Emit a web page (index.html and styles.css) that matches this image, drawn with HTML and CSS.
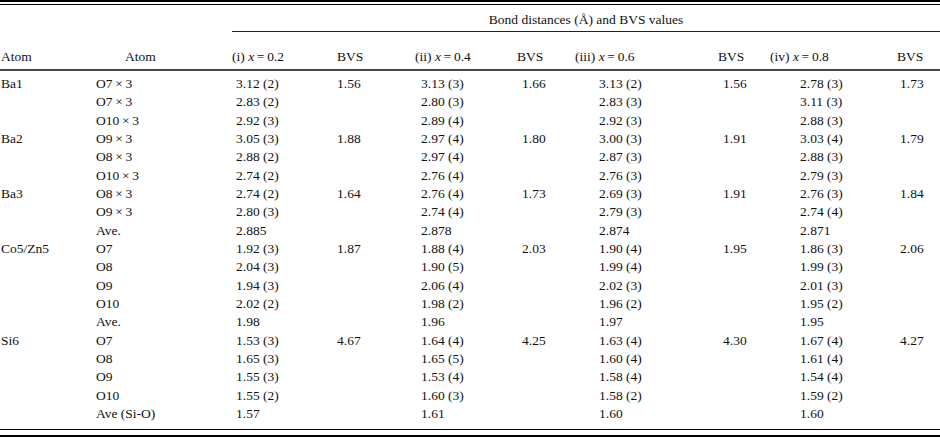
FILE: index.html
```html
<!DOCTYPE html>
<html lang="en">
<head>
<meta charset="utf-8">
<title>Bond distances and BVS values</title>
<link rel="stylesheet" href="styles.css">
</head>
<body>
<div class="sheet">
  <div class="rule-top"></div>
  <table class="bvs">
    <colgroup>
      <col class="w1"><col class="w2"><col class="w3"><col class="w4"><col class="w5">
      <col class="w6"><col class="w7"><col class="w8"><col class="w9"><col class="w10">
    </colgroup>
    <thead>
      <tr class="span-row">
        <th></th><th></th>
        <th colspan="8" class="spanner">Bond distances (Å) and BVS values</th>
      </tr>
      <tr class="head-row">
        <th class="h1">Atom</th>
        <th class="h2">Atom</th>
        <th class="h3">(i) <i>x</i>&thinsp;=&thinsp;0.2</th>
        <th class="h4">BVS</th>
        <th class="h5">(ii) <i>x</i>&thinsp;=&thinsp;0.4</th>
        <th class="h6">BVS</th>
        <th class="h7">(iii) <i>x</i>&thinsp;=&thinsp;0.6</th>
        <th class="h8">BVS</th>
        <th class="h9">(iv) <i>x</i>&thinsp;=&thinsp;0.8</th>
        <th class="h10">BVS</th>
      </tr>
    </thead>
    <tbody>
      <tr class="first"><td>Ba1</td><td>O7&thinsp;×&thinsp;3</td><td>3.12 (2)</td><td>1.56</td><td>3.13 (3)</td><td>1.66</td><td>3.13 (2)</td><td>1.56</td><td>2.78 (3)</td><td>1.73</td></tr>
      <tr><td></td><td>O7&thinsp;×&thinsp;3</td><td>2.83 (2)</td><td></td><td>2.80 (3)</td><td></td><td>2.83 (3)</td><td></td><td>3.11 (3)</td><td></td></tr>
      <tr><td></td><td>O10&thinsp;×&thinsp;3</td><td>2.92 (3)</td><td></td><td>2.89 (4)</td><td></td><td>2.92 (3)</td><td></td><td>2.88 (3)</td><td></td></tr>
      <tr><td>Ba2</td><td>O9&thinsp;×&thinsp;3</td><td>3.05 (3)</td><td>1.88</td><td>2.97 (4)</td><td>1.80</td><td>3.00 (3)</td><td>1.91</td><td>3.03 (4)</td><td>1.79</td></tr>
      <tr><td></td><td>O8&thinsp;×&thinsp;3</td><td>2.88 (2)</td><td></td><td>2.97 (4)</td><td></td><td>2.87 (3)</td><td></td><td>2.88 (3)</td><td></td></tr>
      <tr><td></td><td>O10&thinsp;×&thinsp;3</td><td>2.74 (2)</td><td></td><td>2.76 (4)</td><td></td><td>2.76 (3)</td><td></td><td>2.79 (3)</td><td></td></tr>
      <tr><td>Ba3</td><td>O8&thinsp;×&thinsp;3</td><td>2.74 (2)</td><td>1.64</td><td>2.76 (4)</td><td>1.73</td><td>2.69 (3)</td><td>1.91</td><td>2.76 (3)</td><td>1.84</td></tr>
      <tr><td></td><td>O9&thinsp;×&thinsp;3</td><td>2.80 (3)</td><td></td><td>2.74 (4)</td><td></td><td>2.79 (3)</td><td></td><td>2.74 (4)</td><td></td></tr>
      <tr><td></td><td>Ave.</td><td>2.885</td><td></td><td>2.878</td><td></td><td>2.874</td><td></td><td>2.871</td><td></td></tr>
      <tr><td>Co5/Zn5</td><td>O7</td><td>1.92 (3)</td><td>1.87</td><td>1.88 (4)</td><td>2.03</td><td>1.90 (4)</td><td>1.95</td><td>1.86 (3)</td><td>2.06</td></tr>
      <tr><td></td><td>O8</td><td>2.04 (3)</td><td></td><td>1.90 (5)</td><td></td><td>1.99 (4)</td><td></td><td>1.99 (3)</td><td></td></tr>
      <tr><td></td><td>O9</td><td>1.94 (3)</td><td></td><td>2.06 (4)</td><td></td><td>2.02 (3)</td><td></td><td>2.01 (3)</td><td></td></tr>
      <tr><td></td><td>O10</td><td>2.02 (2)</td><td></td><td>1.98 (2)</td><td></td><td>1.96 (2)</td><td></td><td>1.95 (2)</td><td></td></tr>
      <tr><td></td><td>Ave.</td><td>1.98</td><td></td><td>1.96</td><td></td><td>1.97</td><td></td><td>1.95</td><td></td></tr>
      <tr><td>Si6</td><td>O7</td><td>1.53 (3)</td><td>4.67</td><td>1.64 (4)</td><td>4.25</td><td>1.63 (4)</td><td>4.30</td><td>1.67 (4)</td><td>4.27</td></tr>
      <tr><td></td><td>O8</td><td>1.65 (3)</td><td></td><td>1.65 (5)</td><td></td><td>1.60 (4)</td><td></td><td>1.61 (4)</td><td></td></tr>
      <tr><td></td><td>O9</td><td>1.55 (3)</td><td></td><td>1.53 (4)</td><td></td><td>1.58 (4)</td><td></td><td>1.54 (4)</td><td></td></tr>
      <tr><td></td><td>O10</td><td>1.55 (2)</td><td></td><td>1.60 (3)</td><td></td><td>1.58 (2)</td><td></td><td>1.59 (2)</td><td></td></tr>
      <tr class="last"><td></td><td>Ave (Si-O)</td><td>1.57</td><td></td><td>1.61</td><td></td><td>1.60</td><td></td><td>1.60</td><td></td></tr>
    </tbody>
  </table>
  <div class="rule-bottom"></div>
</div>
</body>
</html>
```
FILE: styles.css
```css
html, body {
  margin: 0;
  padding: 0;
  background: #ffffff;
}

.sheet {
  width: 940px;
  font-family: "Liberation Serif", "Times New Roman", serif;
  font-size: 13.5px;
  color: #111;
}

.rule-top {
  height: 2px;
  border-top: 2px solid #000;
  border-bottom: 1px solid #000;
}

.rule-bottom {
  height: 2px;
  margin-top: 5px;
  background: #000;
}

.bvs {
  width: 940px;
  table-layout: fixed;
  border-collapse: collapse;
  border-spacing: 0;
}

.w1 { width: 90px; }
.w2 { width: 142px; }
.w3 { width: 88px; }
.w4 { width: 80px; }
.w5 { width: 105px; }
.w6 { width: 65px; }
.w7 { width: 130px; }
.w8 { width: 65px; }
.w9 { width: 115px; }
.w10 { width: 60px; }

.bvs th,
.bvs td {
  padding: 0;
  line-height: 18.33px;
  height: 18.33px;
  text-align: left;
  font-weight: normal;
  white-space: nowrap;
  vertical-align: middle;
}

.span-row th {
  height: 22px;
  padding-top: 4px;
  vertical-align: middle;
}

.spanner {
  text-align: center !important;
  border-bottom: 1px solid #222;
}

.head-row th {
  height: 34px;
  vertical-align: bottom;
  padding-bottom: 3px;
  border-bottom: 2px solid #444;
}

.head-row .h1 { padding-left: 1px; }
.head-row .h2 { padding-left: 35px; }
.head-row .h3 { padding-left: 0; }
.head-row .h4 { padding-left: 17px; }
.head-row .h5 { padding-left: 15px; }
.head-row .h6 { padding-left: 12px; }
.head-row .h7 { padding-left: 5px; }
.head-row .h8 { padding-left: 18px; }
.head-row .h9 { padding-left: 5px; }
.head-row .h10 { padding-left: 17px; }

.bvs td:nth-child(1) { padding-left: 1px; }
.bvs td:nth-child(2) { padding-left: 6px; }
.bvs td:nth-child(3) { padding-left: 4px; }
.bvs td:nth-child(4) { padding-left: 17px; }
.bvs td:nth-child(5) { padding-left: 21px; }
.bvs td:nth-child(6) { padding-left: 17px; }
.bvs td:nth-child(7) { padding-left: 29px; }
.bvs td:nth-child(8) { padding-left: 23px; }
.bvs td:nth-child(9) { padding-left: 35px; }
.bvs td:nth-child(10) { padding-left: 20px; }

.bvs tr.first td {
  padding-top: 4px;
}

.bvs tr.last td {
  padding-bottom: 6px;
  border-bottom: 1px solid #000;
}
```
